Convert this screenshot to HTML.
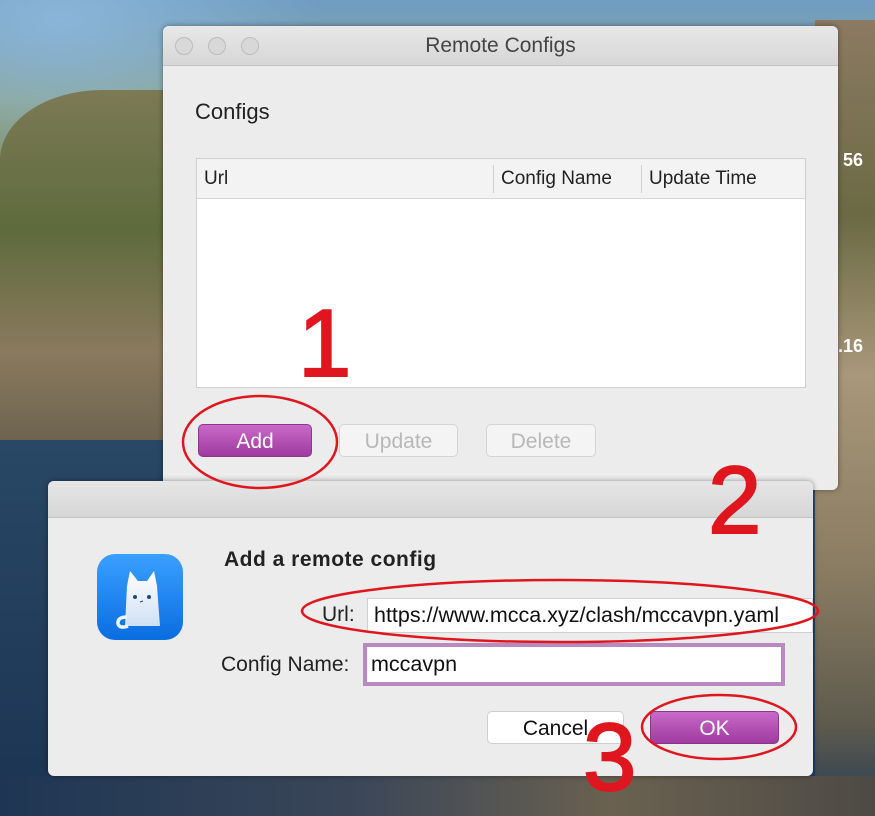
<!DOCTYPE html>
<html><head><meta charset="utf-8"><style>
*{margin:0;padding:0;box-sizing:border-box}
html{background:#2a3a4e}
body{width:875px;height:805px;overflow:hidden;position:relative;font-family:"Liberation Sans",sans-serif;
background:linear-gradient(180deg,#6f9cc4 0%,#8fa68a 12%,#6b7a4a 30%,#7d7450 45%,#8b7b5c 55%,#2d4a6a 62%,#1f3b5c 100%);}
.bg1{position:absolute;left:0;top:0;width:875px;height:805px;
background:radial-gradient(ellipse 260px 140px at 60px 20px,#8ab5d8,transparent)}
.land{position:absolute;left:0;top:90px;width:170px;height:350px;background:linear-gradient(180deg,#7c7a55,#5e6b3c 40%,#8a7a5e 75%,#6d6450);border-radius:60% 0 0 0/20% 0 0 0}
.sea{position:absolute;left:0;top:440px;width:200px;height:365px;background:linear-gradient(180deg,#284866,#1c3452)}
.bottom{position:absolute;left:0;top:776px;width:875px;height:40px;background:linear-gradient(90deg,#1e3654,#3a4658 40%,#6a6150 70%,#4d4a45)}
.rightland{position:absolute;left:815px;top:20px;width:60px;height:785px;background:linear-gradient(180deg,#8c7a62,#6b6a45 25%,#a8977a 45%,#8a7c62 70%,#5d5a4d 90%,#2b3f55)}
.abs{position:absolute}
.win{left:163px;top:26px;width:675px;height:464px;background:#ececec;border-radius:6px;box-shadow:0 0 6px rgba(0,0,0,.4);overflow:hidden}
.tb{position:absolute;left:0;top:0;width:100%;height:40px;background:linear-gradient(#e8e8e8,#d6d6d6);border-bottom:1px solid #c4c4c4;text-align:center;font-size:21px;line-height:40px;color:#444}
.dot{position:absolute;top:11px;width:18px;height:18px;border-radius:50%;background:#d8d8d8;border:1px solid #bcbcbc}
.btn{position:absolute;height:33px;border-radius:5px;font-size:21px;text-align:center;line-height:33px}
.purple{background:linear-gradient(#c86ac8,#a03aa0);color:#fff;border:1px solid #8e358e}
.dis{background:#f4f4f4;color:#b8b8b8;border:1px solid #d4d4d4}
.red{position:absolute;color:#e0161e;font-size:96px;line-height:1;font-family:"Liberation Sans",sans-serif;-webkit-text-stroke:2px #e0161e}
</style></head><body>
<div class="bg1"></div><div class="land"></div><div class="sea"></div><div class="rightland"></div><div class="bottom"></div>
<div class="abs" style="left:843px;top:150px;color:#fff;font-size:18px;font-weight:bold">56</div>
<div class="abs" style="left:838px;top:336px;color:#fff;font-size:18px;font-weight:bold">.16</div>

<div class="abs win">
 <div class="tb">Remote Configs
  <div class="dot" style="left:12px"></div><div class="dot" style="left:45px"></div><div class="dot" style="left:78px"></div>
 </div>
 <div class="abs" style="left:32px;top:73px;font-size:22px;color:#222">Configs</div>
 <div class="abs" style="left:33px;top:132px;width:610px;height:230px;background:#fff;border:1px solid #cfcfcf">
  <div style="height:40px;background:#f3f3f3;border-bottom:1px solid #d6d6d6;font-size:19px;color:#222;position:relative">
   <span class="abs" style="left:7px;top:9px">Url</span>
   <span class="abs" style="left:296px;top:6px;height:28px;border-left:1px solid #d0d0d0"></span>
   <span class="abs" style="left:304px;top:9px">Config Name</span>
   <span class="abs" style="left:444px;top:6px;height:28px;border-left:1px solid #d0d0d0"></span>
   <span class="abs" style="left:452px;top:9px">Update Time</span>
  </div>
 </div>
 <div class="btn purple" style="left:35px;top:398px;width:114px">Add</div>
 <div class="btn dis" style="left:176px;top:398px;width:119px">Update</div>
 <div class="btn dis" style="left:323px;top:398px;width:110px">Delete</div>
</div>

<div class="abs" style="left:48px;top:481px;width:765px;height:295px;background:#ececec;border-radius:6px;box-shadow:0 0 6px rgba(0,0,0,.4);overflow:hidden">
 <div style="height:37px;background:linear-gradient(#e6e6e6,#d6d6d6);border-bottom:1px solid #c4c4c4"></div>
 <div class="abs" style="left:49px;top:73px;width:86px;height:86px;border-radius:18px;background:linear-gradient(#3aa0ff,#0a6de0)">
  <svg width="86" height="86" viewBox="0 0 86 86"><defs><linearGradient id="c" x1="0" y1="0" x2="0" y2="1"><stop offset="0" stop-color="#ffffff"/><stop offset="1" stop-color="#cfe0f4"/></linearGradient></defs><path d="M28 72 L30 32 L33 17 L41 27 L50 27 L57 17 L60 32 L63 72 Z" fill="url(#c)"/><path d="M30 63 Q20 63 21 70 Q23 75 31 72" fill="none" stroke="#eef4fb" stroke-width="3.5"/><circle cx="38" cy="43" r="2" fill="#1f4a80"/><circle cx="52" cy="43" r="2" fill="#1f4a80"/><path d="M43 48 L46 47" stroke="#1f4a80" stroke-width="1"/></svg>
 </div>
 <div class="abs" style="left:176px;top:67px;font-size:21px;font-weight:bold;color:#222;letter-spacing:0.5px">Add a remote config</div>
 <div class="abs" style="left:274px;top:122px;font-size:21px;color:#222">Url:</div>
 <div class="abs" style="left:319px;top:117px;width:446px;height:35px;background:#fff;border:1px solid #d0d0d0;font-size:21.5px;line-height:33px;padding-left:6px;overflow:hidden;white-space:nowrap;color:#111">https://www.mcca.xyz/clash/mccavpn.yaml</div>
 <div class="abs" style="left:173px;top:172px;font-size:21px;color:#222">Config Name:</div>
 <div class="abs" style="left:315px;top:162px;width:422px;height:43px;background:#fff;border:4px solid #b98ac0;font-size:21.5px;line-height:35px;padding-left:4px;color:#111">mccavpn</div>
 <div class="btn" style="left:439px;top:230px;width:137px;background:#fff;border:1px solid #cfcfcf;color:#111">Cancel</div>
 <div class="btn purple" style="left:602px;top:230px;width:129px">OK</div>
</div>

<div class="red" style="left:298px;top:296px">1</div>
<div class="red" style="left:708px;top:453px">2</div>
<div class="red" style="left:583px;top:710px">3</div>
<svg class="abs" style="left:0;top:0" width="875" height="805">
 <g fill="none" stroke="#e0161e" stroke-width="2.5">
  <ellipse cx="260" cy="442" rx="77" ry="46"/>
  <ellipse cx="560" cy="611" rx="258" ry="31"/>
  <ellipse cx="719" cy="727" rx="77" ry="32"/>
 </g>
</svg>
</body></html>
